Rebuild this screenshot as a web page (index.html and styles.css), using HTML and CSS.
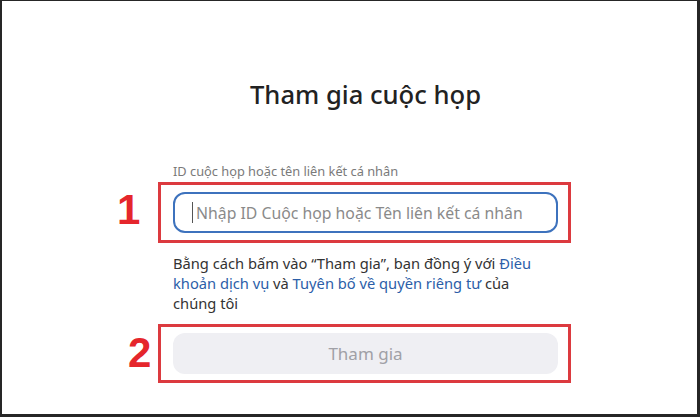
FILE: index.html
```html
<!DOCTYPE html>
<html lang="vi">
<head>
<meta charset="utf-8">
<title>Tham gia cuộc họp</title>
<link rel="stylesheet" href="styles.css">
</head>
<body>
<div class="frame">
  <main class="panel">
    <h1 class="title">Tham gia cuộc họp</h1>
    <div class="label">ID cuộc họp hoặc tên liên kết cá nhân</div>
    <div class="mark mark-field">
      <span class="num num-1">1</span>
      <div class="field">
        <span class="caret"></span>
        <span class="placeholder">Nhập ID Cuộc họp hoặc Tên liên kết cá nhân</span>
      </div>
    </div>
    <p class="terms">Bằng cách bấm vào “Tham gia”, bạn đồng ý với <a class="link">Điều</a> <a class="link">khoản dịch vụ</a> và <a class="link">Tuyên bố về quyền riêng tư</a> của chúng tôi</p>
    <div class="mark mark-btn">
      <span class="num num-2">2</span>
      <button class="join" type="button">Tham gia</button>
    </div>
  </main>
</div>
</body>
</html>
```

FILE: styles.css
```css
* { box-sizing: border-box; }
html, body { margin: 0; padding: 0; background: #fff; }
body { width: 700px; height: 417px; overflow: hidden; font-family: "Noto Sans", "Open Sans", sans-serif; }

.frame {
  width: 700px;
  height: 417px;
  border-style: solid;
  border-color: #262626;
  border-width: 1px 3px 3px 2px;
  background: #fff;
}

.panel {
  width: 385px;
  margin-left: 171px;
  padding-top: 76px;
}

.title {
  margin: 0;
  font-size: 25.6px;
  line-height: 36px;
  font-weight: 500;
  color: #222;
  text-align: center;
}

.label {
  margin-top: 50px;
  font-size: 12.8px;
  line-height: 16px;
  color: #7a7a7a;
}

.mark {
  position: relative;
  border: 3px solid #dc3a3f;
  margin-left: -15px;
  margin-right: -13px;
  padding-left: 12px;
  padding-right: 10px;
}
.mark-field { margin-top: 3px; padding-top: 7px; padding-bottom: 7px; }
.mark-btn { margin-top: 11px; padding-top: 6px; padding-bottom: 6px; }

.num {
  position: absolute;
  font-family: "Liberation Sans", Arial, sans-serif;
  font-weight: 700;
  font-size: 42px;
  line-height: 42px;
  color: #e5262c;
}
.num-1 { left: -44px; top: 4px; }
.num-2 { left: -33px; top: 5px; }

.field {
  height: 41px;
  border: 2px solid #3d72bd;
  border-radius: 12px;
  display: flex;
  align-items: center;
  padding-left: 17px;
}
.caret {
  width: 1px;
  height: 21px;
  background: #555;
  margin-right: 3px;
}
.placeholder {
  font-size: 15.8px;
  color: #8a8a8a;
  white-space: nowrap;
}

.terms {
  max-width: 372px;
  margin: 10px 0 0;
  font-size: 14.7px;
  line-height: 20px;
  color: #333;
}
.link { color: #2c5ea8; text-decoration: none; }

.join {
  display: block;
  width: 100%;
  height: 41px;
  border: none;
  border-radius: 12px;
  background: #efeff3;
  font-family: "Noto Sans", "Open Sans", sans-serif;
  font-size: 17px;
  color: #a0a0a6;
  padding: 0;
}
```
